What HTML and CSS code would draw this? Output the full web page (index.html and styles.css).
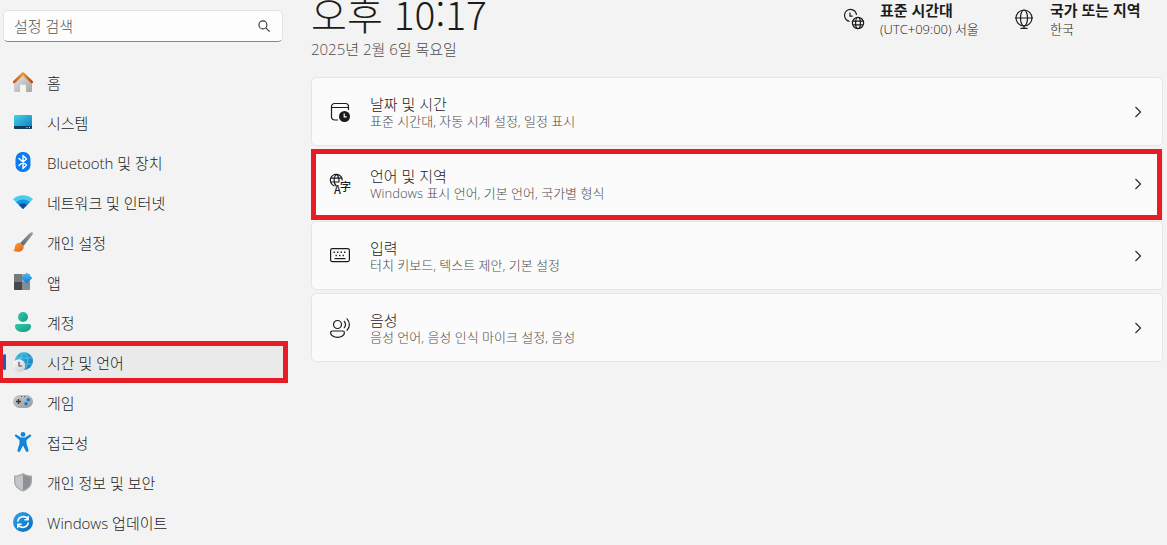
FILE: index.html
```html
<!DOCTYPE html>
<html lang="ko">
  <head>
    <meta charset="utf-8">
    <meta name="viewport" content="width=device-width, initial-scale=1.0">
    <title>시간 및 언어</title>
    <link rel="stylesheet" href="styles.css">
  </head>
  <body>
    <aside class="sidebar">
      <form class="search">
        <input type="text" placeholder="설정 검색" aria-label="설정 검색">
        <button type="button" aria-label="검색">
          <svg width="12" height="12" viewBox="0 0 12 12" fill="none" stroke="#333" stroke-width="1.1"><circle cx="4.9" cy="4.9" r="4"/><path d="M7.8 7.8L11.6 11.6"/></svg>
        </button>
      </form>
      <nav>
        <a href="#home">
          <svg class="icon" viewBox="0 0 20 20">
            <defs>
              <linearGradient id="wall" x1="0" y1="0" x2="1" y2="1"><stop offset="0" stop-color="#e4e4e4"/><stop offset="1" stop-color="#a5a5a5"/></linearGradient>
              <linearGradient id="roof"><stop offset="0" stop-color="#c45a20"/><stop offset=".5" stop-color="#ee9a2c"/><stop offset="1" stop-color="#b8481c"/></linearGradient>
            </defs>
            <path fill="url(#wall)" d="M10 2.5L1 10.5V19a1 1 0 0 0 1 1h5v-7.200h6V20h5a1 1 0 0 0 1-1v-8.500z"/>
            <path fill="none" stroke="url(#roof)" stroke-width="2.600" stroke-linecap="round" stroke-linejoin="round" d="M1.200 10L10 1.500 18.800 10"/>
          </svg>
          <span>홈</span>
        </a>
        <a href="#system">
          <svg class="icon" viewBox="0 0 20 20">
            <defs><linearGradient id="screen" x1="0" y1="0" x2="1" y2="1"><stop offset="0" stop-color="#3fd2e4"/><stop offset="1" stop-color="#1279c4"/></linearGradient></defs>
            <rect x="1" y="3" width="18" height="14" rx="1.200" fill="url(#screen)"/>
            <path fill="#123f5e" d="M1 14h18v1.800a1.200 1.200 0 0 1-1.200 1.200H2.200A1.200 1.200 0 0 1 1 15.800z"/>
            <path fill="#bfe4f2" d="M13.500 15h1v1h-1zM16 15h1v1h-1z"/>
          </svg>
          <span>시스템</span>
        </a>
        <a href="#bluetooth">
          <svg class="icon" viewBox="0 0 20 20">
            <rect x="2.500" width="15" height="20" rx="7" fill="#0a7bf0"/>
            <path fill="none" stroke="#fff" stroke-width="1.400" stroke-linejoin="round" stroke-linecap="round" d="M6 6.500l7.500 6.500L10 16.500v-13L13.500 7 6 13.500"/>
          </svg>
          <span>Bluetooth 및 장치</span>
        </a>
        <a href="#network">
          <svg class="icon" viewBox="0 0 20 20">
            <path fill="#48cdf2" d="M0 7.200C5 2 15 2 20 7.200L10 17z"/>
            <path fill="#1a94dc" d="M3.200 10.300c3.600-3.800 10-3.800 13.600 0L10 17z"/>
            <path fill="#0b519e" d="M6 13c2-2.200 6-2.200 8 0l-4 4z"/>
          </svg>
          <span>네트워크 및 인터넷</span>
        </a>
        <a href="#personal">
          <svg class="icon" viewBox="0 0 20 20">
            <defs>
              <linearGradient id="handle" x1="1" y1="0" x2="0" y2="1"><stop offset="0" stop-color="#98a2aa"/><stop offset="1" stop-color="#59636c"/></linearGradient>
              <linearGradient id="brush" x1="0" y1="0" x2="1" y2="1"><stop offset="0" stop-color="#fba43c"/><stop offset="1" stop-color="#e25e12"/></linearGradient>
            </defs>
            <path fill="url(#handle)" d="M19.600.4c.7.700.3 1.700-.4 2.600L10.500 14 7 11.200 16.300 1.600C17.500.5 18.900-.2 19.600.4z"/>
            <path fill="url(#brush)" d="M6.500 10.800l4 3.500c.6 3-2 5.500-5 5.500-2 0-4.500-.3-5.500-1.300 2-.5 1.500-2 2-4.200.4-2 2.200-3.500 4.500-3.500z"/>
          </svg>
          <span>개인 설정</span>
        </a>
        <a href="#apps">
          <svg class="icon" viewBox="0 0 20 20">
            <defs><linearGradient id="tile" x1="0" y1="0" x2="1" y2="1"><stop offset="0" stop-color="#4cc3f4"/><stop offset="1" stop-color="#1475d0"/></linearGradient></defs>
            <path fill="#747a80" d="M1 2h8v8H1z"/>
            <path fill="#45494d" d="M1 10h8v8H2a1 1 0 0 1-1-1z"/>
            <path fill="#9da3a8" d="M9 2h8v8H9z"/>
            <path fill="#858b91" d="M9 10h8v7a1 1 0 0 1-1 1H9z"/>
            <rect x="9.800" y="2" width="8" height="8" rx=".8" fill="url(#tile)" transform="rotate(45 13.800 6)"/>
          </svg>
          <span>앱</span>
        </a>
        <a href="#accounts">
          <svg class="icon" viewBox="0 0 20 20">
            <defs><linearGradient id="person" x1="0" y1="0" x2="1" y2="1"><stop offset="0" stop-color="#36c9a8"/><stop offset="1" stop-color="#129b86"/></linearGradient></defs>
            <circle cx="10" cy="5" r="5" fill="url(#person)"/>
            <path fill="url(#person)" d="M4 12h12a2 2 0 0 1 2 2c0 4-3.600 6-8 6s-8-2-8-6a2 2 0 0 1 2-2z"/>
          </svg>
          <span>계정</span>
        </a>
        <a href="#time" class="current marked" aria-current="page">
          <svg class="icon" viewBox="0 0 20 20">
            <defs>
              <linearGradient id="earth" x1="0" y1="0" x2="1" y2="1"><stop offset="0" stop-color="#38c4e2"/><stop offset="1" stop-color="#1474bd"/></linearGradient>
              <linearGradient id="dial" x1="0" y1="0" x2="1" y2="1"><stop offset="0" stop-color="#fff"/><stop offset="1" stop-color="#c5c8ca"/></linearGradient>
            </defs>
            <circle cx="11" cy="9" r="9" fill="url(#earth)"/>
            <path fill="none" stroke="#6fd3ea" stroke-width=".6" d="M3 6h16M3 12h16M11 0C6 5 6 13 11 18M11 0c5 5 5 13 0 18"/>
            <circle cx="6" cy="13.700" r="6.400" fill="url(#dial)"/>
            <path fill="none" stroke="#555" stroke-width="1.200" d="M6 9.800v4.200h3"/>
          </svg>
          <span>시간 및 언어</span>
        </a>
        <a href="#gaming">
          <svg class="icon" viewBox="0 0 20 20">
            <defs><linearGradient id="pad" x1="0" y1="0" x2="1" y2="1"><stop offset="0" stop-color="#c8cbce"/><stop offset="1" stop-color="#959a9f"/></linearGradient></defs>
            <rect y="3" width="20" height="13" rx="6.500" fill="url(#pad)"/>
            <path fill="none" stroke="#34383c" stroke-width="1.400" d="M5.500 7v5M3 9.500h5"/>
            <path fill="#555" d="M8 4h1v1H8zM11 4h1v1h-1z"/>
            <circle cx="15.300" cy="7.700" r="1.700" fill="#1478cb"/><circle cx="13" cy="11.700" r="1.700" fill="#1478cb"/>
          </svg>
          <span>게임</span>
        </a>
        <a href="#accessibility">
          <svg class="icon" viewBox="0 0 20 20">
            <g fill="#1284dc">
              <circle cx="10" cy="2.400" r="2.400"/>
              <path d="M3.600 2.700L8 5.500h4l4.400-2.800c1.400-.8 2.400 1 1.300 1.900L13.500 8v3.500l2 6.500c.4 2-2 2.700-2.700 1L10 13.500 7.200 19c-.7 1.700-3.100 1-2.700-1l2-6.500V8L2.300 4.600C1.200 3.700 2.200 1.900 3.600 2.700z"/>
            </g>
          </svg>
          <span>접근성</span>
        </a>
        <a href="#privacy">
          <svg class="icon" viewBox="0 0 20 20">
            <path fill="#a5a8ab" d="M10 1c3 2 6 2.500 9 2.500V9c0 5-3.500 8.500-9 10.500C4.500 17.500 1 14 1 9V3.500C4 3.500 7 3 10 1z"/>
            <path fill="#c3c5c7" d="M10 2.800v15.400C5.500 16.500 2.300 13.500 2.300 9V4.700C5 4.600 7.500 4.200 10 2.800z"/>
            <path fill="#8d9195" d="M10 2.800c2.500 1.400 5 1.800 7.700 1.900V9c0 4.500-3.200 7.500-7.700 9.200z"/>
          </svg>
          <span>개인 정보 및 보안</span>
        </a>
        <a href="#update">
          <svg class="icon" viewBox="0 0 20 20">
            <defs><linearGradient id="sync" x1="0" y1="0" x2="1" y2="1"><stop offset="0" stop-color="#2ea6e8"/><stop offset="1" stop-color="#0869bd"/></linearGradient></defs>
            <circle cx="10" cy="10" r="10" fill="url(#sync)"/>
            <path fill="none" stroke="#fff" stroke-width="1.500" stroke-linecap="round" stroke-linejoin="round" d="M4.800 9A5.500 5.500 0 0 1 15 7.500M15.200 4.500v3.300h-3.300M15.200 11A5.500 5.500 0 0 1 5 12.500M4.800 15.500v-3.300h3.300"/>
          </svg>
          <span>Windows 업데이트</span>
        </a>
      </nav>
    </aside>

    <main>
      <header>
        <div class="clock">
          <h1>오후 10:17</h1>
          <p>2025년 2월 6일 목요일</p>
        </div>
        <div class="region">
          <svg class="icon" viewBox="0 0 20 20" fill="none" stroke="#1b1b1b" stroke-width="1.200">
            <path d="M5.500 12.300A6 6 0 1 1 12.500 6M6 3.500v3.700h2.700"/>
            <circle cx="14" cy="14" r="5.600"/>
            <ellipse cx="14" cy="14" rx="2.400" ry="5.600"/>
            <path d="M9 12.200h10M9 15.800h10"/>
          </svg>
          <div>
            <h2>표준 시간대</h2>
            <p>(UTC+09:00) 서울</p>
          </div>
        </div>
        <div class="region">
          <svg class="icon" viewBox="0 0 20 20" fill="none" stroke="#1b1b1b" stroke-width="1.200">
            <circle cx="10" cy="9" r="8"/>
            <ellipse cx="10" cy="9" rx="3.500" ry="8"/>
            <path d="M1 9h18M10 17v2.300M6.500 19.300h7"/>
          </svg>
          <div>
            <h2>국가 또는 지역</h2>
            <p>한국</p>
          </div>
        </div>
      </header>

      <section class="cards">
        <a class="card" href="#datetime">
          <svg class="icon" viewBox="0 0 20 20" fill="none" stroke="#1b1b1b" stroke-width="1.200">
            <path d="M8 18H4.500A3 3 0 0 1 1.500 15V4.500a3 3 0 0 1 3-3h11a3 3 0 0 1 3 3V8M1.500 5.500h17"/>
            <circle cx="14.500" cy="14.500" r="5.500" fill="#1b1b1b" stroke="none"/>
            <path stroke="#fff" d="M14.200 11.500v3.300h2.500"/>
          </svg>
          <div>
            <h3>날짜 및 시간</h3>
            <p>표준 시간대, 자동 시계 설정, 일정 표시</p>
          </div>
          <svg class="chevron" viewBox="0 0 8 12"><path d="M1.500 1l5 5-5 5"/></svg>
        </a>
        <a class="card marked" href="#language">
          <svg class="icon" viewBox="0 0 20 20" fill="none" stroke="#1b1b1b" stroke-width="1.200">
            <path d="M4.500 12A6 6 0 1 1 12.300 6.500M6.300 12C3.200 9 3.500 3 6.300.200M6.300.200C8.500 2 9.300 5 9 8M.8 4.200h11M.8 8h8.500"/>
            <text class="latin" x="4" y="20">A</text>
            <text class="hanja" x="10" y="17">字</text>
          </svg>
          <div>
            <h3>언어 및 지역</h3>
            <p>Windows 표시 언어, 기본 언어, 국가별 형식</p>
          </div>
          <svg class="chevron" viewBox="0 0 8 12"><path d="M1.500 1l5 5-5 5"/></svg>
        </a>
        <a class="card" href="#typing">
          <svg class="icon" viewBox="0 0 20 20" fill="none" stroke="#1b1b1b" stroke-width="1.200">
            <rect x=".6" y="2.600" width="18.800" height="13" rx="1.800"/>
            <path stroke-width="1.400" stroke-dasharray="1.400 2.100" d="M3.500 6.200h13M5.500 9.500h10"/>
            <path d="M4.500 12.600h11"/>
          </svg>
          <div>
            <h3>입력</h3>
            <p>터치 키보드, 텍스트 제안, 기본 설정</p>
          </div>
          <svg class="chevron" viewBox="0 0 8 12"><path d="M1.500 1l5 5-5 5"/></svg>
        </a>
        <a class="card" href="#speech">
          <svg class="icon" viewBox="0 0 20 20" fill="none" stroke="#1b1b1b" stroke-width="1.200" stroke-linecap="round">
            <circle cx="7.500" cy="6.500" r="4"/>
            <path d="M2.300 13h10.400a1.700 1.700 0 0 1 1.700 1.700c0 2.800-3.200 4.700-6.900 4.700S.6 17.500.6 14.700A1.700 1.700 0 0 1 2.300 13zM14.300 3.300c1.400 1.800 1.400 4.600 0 6.400M17 .8c3.200 3.300 3.200 8.200 0 11.500"/>
          </svg>
          <div>
            <h3>음성</h3>
            <p>음성 언어, 음성 인식 마이크 설정, 음성</p>
          </div>
          <svg class="chevron" viewBox="0 0 8 12"><path d="M1.500 1l5 5-5 5"/></svg>
        </a>
      </section>
    </main>
  </body>
</html>
```
FILE: styles.css
```css
* {
  box-sizing: border-box;
}
body {
  background:  #f3f3f3;
  color:       #1b1b1b;
  display:     flex;
  font-family: "Open Sans", "Noto Sans CJK KR", sans-serif;
  font-size:   15px;
  line-height: 20px;
  margin:      0;
}
h1,h2,h3,p {
  font-weight: normal;
  margin:      0;
}
a {
  color:           inherit;
  text-decoration: none;
}
.icon {
  flex:     none;
  height:   20px;
  overflow: visible;
  width:    20px;
}

/* sidebar */
.sidebar {
  flex:    none;
  padding: 10px 5px 0 3px;
  width:   288px;
}
.search {
  align-items:         center;
  background:          #fdfdfd;
  border:              1px solid #e3e3e3;
  border-bottom-color: #868686;
  border-radius:       5px;
  display:             flex;
  height:              32px;
  margin-bottom:       22px;
  padding:             0 12px 0 10px;
}
.search input {
  background:  none;
  border:      0;
  flex:        1;
  font-family: inherit;
  font-size:   15px;
  font-weight: 300;
  min-width:   0;
  outline:     none;
  padding:     0;
}
.search input::placeholder {
  color: #555;
}
.search button {
  background: none;
  border:     0;
  display:    flex;
  padding:    0;
}
nav {
  display:        flex;
  flex-direction: column;
  font-weight:    300;
  gap:            4px;
}
nav a {
  align-items:   center;
  border-radius: 4px;
  display:       flex;
  gap:           14px;
  height:        36px;
  padding:       0 10px;
  position:      relative;
}
nav span {
  padding-top: 2px;
}
nav .current {
  background: #eaeaea;
}
nav .current::before {
  background:    #1a5fb8;
  border-radius: 2px;
  content:       "";
  height:        16px;
  left:          0;
  position:      absolute;
  top:           10px;
  width:         3px;
}

/* red frame around a marked entry */
.marked::after {
  border:   5px solid #e81c24;
  content:  "";
  inset:    -1px 0 -3px -1px;
  position: absolute;
  z-index:  1;
}
nav .marked::after {
  inset: -3px -5px;
}

/* content */
main {
  flex:      1;
  min-width: 0;
  padding:   0 4px 0 23px;
}
header {
  display:       flex;
  margin-bottom: 18px;
  margin-top:    -13px;
}
.clock {
  flex: 1;
}
.clock h1 {
  font-family: "Noto Sans CJK KR", sans-serif;
  font-size:   39px;
  font-weight: 300;
  line-height: 52px;
}
.clock p {
  color:       #4c4c4c;
  font-weight: 300;
}
.region {
  display:     flex;
  gap:         16px;
  padding-top: 13px;
  width:       170px;
}
.region:last-child {
  width: 149px;
}
.region .icon {
  margin-top: 9px;
}
.region h2 {
  font-size:   15px;
  font-weight: bold;
}
.region p,.card p {
  font-size:   13px;
  font-weight: 300;
  line-height: 18px;
}
.cards {
  display:        flex;
  flex-direction: column;
  gap:            3px;
}
.card {
  align-items:   center;
  background:    #fbfbfb;
  border:        1px solid #e5e5e5;
  border-radius: 5px;
  display:       flex;
  gap:           20px;
  height:        69px;
  padding:       0 20px 0 18px;
  position:      relative;
}
.card div {
  flex:        1;
  padding-top: 2px;
}
.card h3 {
  font-size:   15px;
  font-weight: 300;
  line-height: 16px;
}
.card p {
  color: #4c4c4c;
}
.chevron {
  fill:         none;
  height:       12px;
  stroke:       #333;
  stroke-width: 1.3;
  width:        8px;
}
.latin,.hanja {
  fill:        #1b1b1b;
  font-family: "Noto Sans CJK KR", sans-serif;
  font-size:   11px;
  font-weight: 500;
  stroke:      none;
}
```
